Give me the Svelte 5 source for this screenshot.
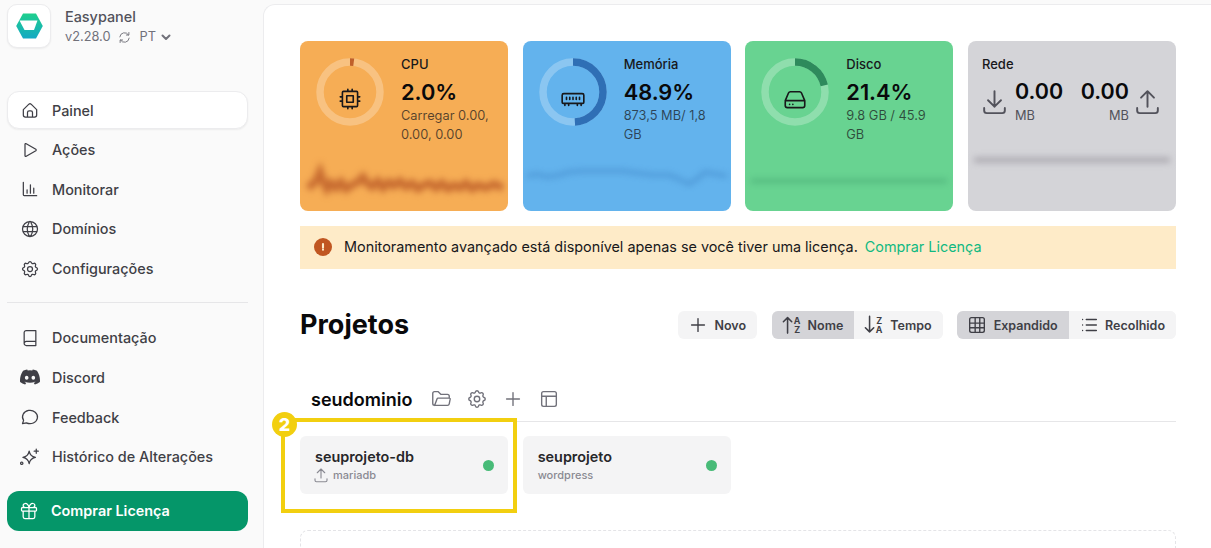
<script lang="ts">
  const navMain = [
    { label: 'Painel', icon: 'home', active: true },
    { label: 'Ações', icon: 'play' },
    { label: 'Monitorar', icon: 'bars' },
    { label: 'Domínios', icon: 'globe' },
    { label: 'Configurações', icon: 'gear' }
  ];
  const navHelp = [
    { label: 'Documentação', icon: 'book' },
    { label: 'Discord', icon: 'discord' },
    { label: 'Feedback', icon: 'chat' },
    { label: 'Histórico de Alterações', icon: 'sparkle' }
  ];
  const gear =
    'M10.325 4.317c.426-1.756 2.924-1.756 3.35 0a1.724 1.724 0 0 0 2.573 1.066c1.543-.94 3.31.826 2.37 2.37a1.724 1.724 0 0 0 1.065 2.572c1.756.426 1.756 2.924 0 3.35a1.724 1.724 0 0 0-1.066 2.573c.94 1.543-.826 3.31-2.37 2.37a1.724 1.724 0 0 0-2.572 1.065c-.426 1.756-2.924 1.756-3.35 0a1.724 1.724 0 0 0-2.573-1.066c-1.543.94-3.31-.826-2.37-2.37a1.724 1.724 0 0 0-1.065-2.572c-1.756-.426-1.756-2.924 0-3.35a1.724 1.724 0 0 0 1.066-2.573c-.94-1.543.826-3.31 2.37-2.37c1 .608 2.296.07 2.572-1.065z M9 12a3 3 0 1 0 6 0a3 3 0 0 0-6 0';
  const icons: Record<string, string> = {
    home: 'M4 11.5 10.7 5a2 2 0 0 1 2.6 0L20 11.5V18a2.5 2.5 0 0 1-2.5 2.5h-11A2.5 2.5 0 0 1 4 18z M9 20.5V15a2 2 0 0 1 2-2h2a2 2 0 0 1 2 2v5.5',
    play: 'M6 5.2v13.6a1 1 0 0 0 1.5.8L19 12.8a1 1 0 0 0 0-1.6L7.500 4.400A1 1 0 0 0 6 5.200z',
    bars: 'M4 4v15a1 1 0 0 0 1 1h15 M8.500 17v-4 M12.500 17V7 M16.500 17v-6',
    globe: 'M3 12a9 9 0 1 0 18 0a9 9 0 0 0-18 0 M3.600 9h16.800 M3.600 15h16.800 M11.500 3a17 17 0 0 0 0 18 M12.500 3a17 17 0 0 1 0 18',
    gear,
    book: 'M5 5.500A2.500 2.500 0 0 1 7.500 3H19v18H7.500A2.500 2.500 0 0 1 5 18.500z M5 18.500A2.500 2.500 0 0 1 7.500 16H19',
    chat: 'M3 20l1.300-3.900A9 8 0 1 1 7.700 19L3 20',
    sparkle: 'M11 5c.8 4.400 3.200 6.800 7.500 7.500-4.300.8-6.700 3.200-7.500 7.500-.8-4.300-3.200-6.700-7.500-7.500 4.300-.7 6.700-3.100 7.500-7.500z M19.500 2.500v5 M17 5h5 M3.500 19.500a1.400 1.400 0 1 0 0 .01',
    gift: 'M4 8h16a1 1 0 0 1 1 1v2a1 1 0 0 1-1 1H4a1 1 0 0 1-1-1V9a1 1 0 0 1 1-1z M12 8v13 M19 12v7a2 2 0 0 1-2 2H7a2 2 0 0 1-2-2v-7 M7.500 8a2.500 2.500 0 0 1 0-5A4.800 8 0 0 1 12 8a4.800 8 0 0 1 4.500-5a2.500 2.500 0 0 1 0 5',
    plus: 'M12 5v14 M5 12h14',
    download: 'M4 17v2a2 2 0 0 0 2 2h12a2 2 0 0 0 2-2v-2 M7 11l5 5 5-5 M12 4v12',
    upload: 'M4 17v2a2 2 0 0 0 2 2h12a2 2 0 0 0 2-2v-2 M7 9l5-5 5 5 M12 4v12',
    cpu: 'M6 5h12a1 1 0 0 1 1 1v12a1 1 0 0 1-1 1H6a1 1 0 0 1-1-1V6a1 1 0 0 1 1-1z M9 9h6v6H9z M3 10h2 M3 14h2 M10 3v2 M14 3v2 M21 10h-2 M21 14h-2 M14 21v-2 M10 21v-2',
    ram: 'M3.500 7h17a1.500 1.500 0 0 1 1.500 1.500V15a1 1 0 0 1-1 1H3a1 1 0 0 1-1-1V8.500A1.500 1.500 0 0 1 3.500 7z M6 10.500v2 M9 10.500v2 M12 10.500v2 M15 10.500v2 M18 10.500v2 M4.500 16v2 M8 16v2 M16 16v2 M19.500 16v2',
    disk: 'M3 13.500 6 6.500a2 2 0 0 1 1.800-1.200h8.400A2 2 0 0 1 18 6.500l3 7 M3 13.500h18V18a2 2 0 0 1-2 2H5a2 2 0 0 1-2-2z M7 17h.01 M10 17h.01',
    table: 'M6 4h12a2 2 0 0 1 2 2v12a2 2 0 0 1-2 2H6a2 2 0 0 1-2-2V6a2 2 0 0 1 2-2z M4 10h16 M4 15h16 M10 4v16 M15 4v16',
    list: 'M9 6h11 M9 12h11 M9 18h11 M5 6v.01 M5 12v.01 M5 18v.01',
    folder: 'M5 19l2.757-7.351a1 1 0 0 1 .936-.649h12.307a1 1 0 0 1 .986 1.164l-.996 5.211a2 2 0 0 1-1.964 1.625H5a2 2 0 0 1-2-2V6a2 2 0 0 1 2-2h4l3 3h7a2 2 0 0 1 2 2v2',
    layout: 'M6 4h12a2 2 0 0 1 2 2v12a2 2 0 0 1-2 2H6a2 2 0 0 1-2-2V6a2 2 0 0 1 2-2z M4 9h16 M9 9v11',
    reload: 'M19.500 13a7.600 7.600 0 0 1-14 3 M4.500 11a7.600 7.600 0 0 1 14-3 M19 4v4h-4 M5 20v-4h4',
    warn: 'M12 7v6 M12 16.500v.01'
  };
  const discord =
    'M20.317 4.37a19.791 19.791 0 0 0-4.885-1.515.074.074 0 0 0-.079.037c-.21.375-.444.864-.608 1.25a18.27 18.27 0 0 0-5.487 0 12.64 12.64 0 0 0-.617-1.25.077.077 0 0 0-.079-.037A19.736 19.736 0 0 0 3.677 4.37a.07.07 0 0 0-.032.027C.533 9.046-.32 13.58.099 18.057a.082.082 0 0 0 .031.057 19.9 19.9 0 0 0 5.993 3.03.078.078 0 0 0 .084-.028 14.09 14.09 0 0 0 1.226-1.994.076.076 0 0 0-.041-.106 13.107 13.107 0 0 1-1.872-.892.077.077 0 0 1-.008-.128 10.2 10.2 0 0 0 .372-.292.074.074 0 0 1 .077-.01c3.928 1.793 8.18 1.793 12.062 0a.074.074 0 0 1 .078.01c.12.098.246.198.373.292a.077.077 0 0 1-.006.127 12.299 12.299 0 0 1-1.873.892.077.077 0 0 0-.041.107c.36.698.772 1.362 1.225 1.993a.076.076 0 0 0 .084.028 19.839 19.839 0 0 0 6.002-3.03.077.077 0 0 0 .032-.054c.5-5.177-.838-9.674-3.549-13.66a.061.061 0 0 0-.031-.03zM8.02 15.33c-1.183 0-2.157-1.085-2.157-2.419 0-1.333.956-2.419 2.157-2.419 1.21 0 2.176 1.096 2.157 2.42 0 1.333-.956 2.418-2.157 2.418zm7.975 0c-1.183 0-2.157-1.085-2.157-2.419 0-1.333.955-2.419 2.157-2.419 1.21 0 2.176 1.096 2.157 2.42 0 1.333-.946 2.418-2.157 2.418z';

  const R = 30;
  const C = 2 * Math.PI * R;
  const stats = [
    {
      cls: 'cpu', title: 'CPU', value: '2.0%', sub: 'Carregar 0.00, 0.00, 0.00', pct: 2, icon: 'cpu', arc: '#c0602a',
      line: 'M8 33 L13 29 L17 24 L20 17 L23 26 L27 34 L31 28 L36 33 L41 27 L46 34 L52 30 L58 27 L63 22 L67 28 L72 32 L78 26 L83 33 L89 27 L94 31 L100 26 L106 32 L112 28 L118 34 L124 30 L130 28 L136 33 L142 28 L148 34 L154 30 L160 33 L166 28 L172 34 L178 30 L186 33 L194 29 L203 33',
      sw: 7.5, op: 0.85
    },
    {
      cls: 'mem', title: 'Memória', value: '48.9%', sub: '873,5 MB/ 1,8 GB', pct: 48.9, icon: 'ram', arc: '#2f6fb5',
      line: 'M4 21 L14 19 L24 22 L36 20 L46 17 L60 16 L80 16 L100 16 L114 18 L130 20 L146 20 L156 24 L166 29 L174 24 L182 17 L192 19 L204 21',
      sw: 3, op: 0.5
    }
  ];
</script>

{#snippet icon(name: string, size = 20, sw = 1.5)}
  <svg class="ico" width={size} height={size} viewBox="0 0 24 24" fill="none" stroke="currentColor" stroke-width={sw} stroke-linecap="round" stroke-linejoin="round" aria-hidden="true">
    {#if name === 'discord'}
      <path d={discord} fill="currentColor" stroke="none" />
    {:else}
      <path d={icons[name]} />
    {/if}
  </svg>
{/snippet}

{#snippet sortIcon(top: string, bottom: string, up: boolean)}
  <svg class="ico" width="21.500" height="21.500" viewBox="0 0 18 18" fill="none" stroke="currentColor" stroke-width="1.300" stroke-linecap="round" stroke-linejoin="round" aria-hidden="true">
    {#if up}
      <path d="M5.500 16V3 M2 6.500 5.500 3 9 6.500" />
    {:else}
      <path d="M5.500 2v13 M2 11.500 5.500 15 9 11.500" />
    {/if}
    <text x="13.500" y="8" class="sort-letter">{top}</text>
    <text x="13.500" y="16" class="sort-letter">{bottom}</text>
  </svg>
{/snippet}

{#snippet ring(pct: number, arc: string, name: string)}
  <div class="ring">
    <svg width="68" height="68" viewBox="0 0 68 68">
      <circle cx="34" cy="34" r={R} fill="none" stroke="rgba(255,255,255,0.26)" stroke-width="7.500" />
      <circle cx="34" cy="34" r={R} fill="none" stroke={arc} stroke-width="7.500" stroke-dasharray="{(C * pct) / 100} {C}" transform="rotate(-90 34 34)" />
    </svg>
    <div class="ring-icon">{@render icon(name, 26, 1.5)}</div>
  </div>
{/snippet}

<div class="shell">
  <aside class="side">
    <div class="brand">
      <div class="logo">
        <svg width="27" height="26" viewBox="0 0 27 26" aria-hidden="true">
          <defs>
            <linearGradient id="lg" x1="0" y1="0" x2="0" y2="1">
              <stop offset="0" stop-color="#1fcf8c" />
              <stop offset="1" stop-color="#14a9c4" />
            </linearGradient>
          </defs>
          <path d="M7 0.500h13L26.800 13 20 25.500H7L.200 13z" fill="url(#lg)" />
          <path d="M3.500 7.500H21.500L18 17H8.500z" fill="#fff" />
        </svg>
      </div>
      <div class="brand-text">
        <div class="brand-name">Easypanel</div>
        <div class="brand-meta">
          <span>v2.28.0</span>
          {@render icon('reload', 15)}
          <span class="lang">PT</span>
          <svg width="12" height="12" viewBox="0 0 12 12" fill="none" stroke="currentColor" stroke-width="2" stroke-linecap="round" stroke-linejoin="round"><path d="M2.500 4.500 6 8l3.500-3.500" /></svg>
        </div>
      </div>
    </div>

    <nav class="nav nav-main">
      {#each navMain as item}
        <div class="nav-item" class:active={item.active}>
          {@render icon(item.icon)}
          <span>{item.label}</span>
        </div>
      {/each}
    </nav>
    <div class="divider"></div>
    <nav class="nav">
      {#each navHelp as item}
        <div class="nav-item">
          {@render icon(item.icon)}
          <span>{item.label}</span>
        </div>
      {/each}
    </nav>
    <div class="buy">
      {@render icon('gift')}
      <span>Comprar Licença</span>
    </div>
  </aside>

  <main class="main">
    <section class="stats">
      {#each stats as s}
        <div class="stat {s.cls}">
          <div class="stat-top">
            {@render ring(s.pct, s.arc, s.icon)}
            <div class="stat-text">
              <div class="stat-title">{s.title}</div>
              <div class="stat-value">{s.value}</div>
              <div class="stat-sub">{s.sub}</div>
            </div>
          </div>
          <svg class="spark" viewBox="0 0 208 56" width="208" height="56" preserveAspectRatio="none">
            <path d={s.line} fill="none" stroke={s.arc} stroke-width={s.sw} opacity={s.op} />
          </svg>
        </div>
      {/each}

      <div class="stat disk">
        <div class="stat-top">
          {@render ring(21.4, '#2e8a5c', 'disk')}
          <div class="stat-text">
            <div class="stat-title">Disco</div>
            <div class="stat-value">21.4%</div>
            <div class="stat-sub">9.8 GB / 45.9 GB</div>
          </div>
        </div>
        <svg class="spark" viewBox="0 0 208 56" width="208" height="56" preserveAspectRatio="none">
          <path d="M6 26H202" fill="none" stroke="#3f9e6e" stroke-width="3" opacity="0.7" />
        </svg>
      </div>

      <div class="stat net">
        <div class="stat-title">Rede</div>
        <div class="net-row">
          <div class="net-icon">{@render icon('download', 31)}</div>
          <div class="net-val">
            <div class="net-num">0.00</div>
            <div class="net-unit">MB</div>
          </div>
          <div class="net-val right">
            <div class="net-num">0.00</div>
            <div class="net-unit">MB</div>
          </div>
          <div class="net-icon">{@render icon('upload', 31)}</div>
        </div>
        <svg class="spark" viewBox="0 0 208 56" width="208" height="56" preserveAspectRatio="none">
          <path d="M6 5H202" fill="none" stroke="#a9a7ae" stroke-width="5" />
        </svg>
      </div>
    </section>

    <div class="alert">
      <span class="alert-dot">
        <svg width="14" height="14" viewBox="0 0 24 24" fill="none" stroke="#fdeccb" stroke-width="3.600" stroke-linecap="round"><path d={icons.warn} /></svg>
      </span>
      <span>Monitoramento avançado está disponível apenas se você tiver uma licença.</span>
      <span class="alert-link">Comprar Licença</span>
    </div>

    <header class="projects-head">
      <h1>Projetos</h1>
      <div class="actions">
        <div class="btn">{@render icon('plus', 22)}<span>Novo</span></div>
        <div class="seg">
          <div class="btn on">{@render sortIcon('A', 'Z', true)}<span>Nome</span></div>
          <div class="btn">{@render sortIcon('Z', 'A', false)}<span>Tempo</span></div>
        </div>
        <div class="seg">
          <div class="btn on">{@render icon('table', 22)}<span>Expandido</span></div>
          <div class="btn">{@render icon('list', 22)}<span>Recolhido</span></div>
        </div>
      </div>
    </header>

    <div class="group-head">
      <h2>seudominio</h2>
      <div class="group-icons">
        {@render icon('folder', 22)}
        {@render icon('gear', 22)}
        {@render icon('plus', 22)}
        {@render icon('layout', 22)}
      </div>
    </div>

    <section class="services">
      <div class="service">
        <div class="service-text">
          <div class="service-name">seuprojeto-db</div>
          <div class="service-type"><span class="type-icon">{@render icon('upload', 18)}</span><span>mariadb</span></div>
        </div>
        <span class="dot"></span>
        <div class="mark"><span class="mark-badge">2</span></div>
      </div>
      <div class="service">
        <div class="service-text">
          <div class="service-name">seuprojeto</div>
          <div class="service-type"><span>wordpress</span></div>
        </div>
        <span class="dot"></span>
      </div>
    </section>

    <div class="dropzone"></div>
  </main>
</div>

<style>
  :global(body) {
    margin: 0;
    background: #fafafa;
    font-family: Inter, "Liberation Sans", sans-serif;
    color: #3f3f46;
    overflow: hidden;
  }
  .shell {
    display: flex;
    height: 548px;
    overflow: hidden;
  }
  .ico {
    flex: none;
    display: block;
  }

  .side {
    width: 263px;
    flex: none;
    box-sizing: border-box;
    padding: 4px 15px 0 7px;
  }
  .brand {
    display: flex;
    gap: 14px;
  }
  .logo {
    width: 42px;
    height: 42px;
    background: #fff;
    border: 1px solid #ececee;
    border-radius: 10px;
    box-shadow: 0 1px 2px rgba(0, 0, 0, 0.06);
    display: flex;
    align-items: center;
    justify-content: center;
  }
  .brand-text {
    padding-top: 4px;
  }
  .brand-name {
    font-size: 14.400px;
    line-height: 17px;
    font-weight: 500;
    color: #52525b;
  }
  .brand-meta {
    display: flex;
    align-items: center;
    gap: 6px;
    margin-top: 3px;
    font-size: 12.800px;
    line-height: 18px;
    color: #71717a;
  }
  .lang {
    margin-left: 2px;
    margin-right: -2px;
  }
  .nav {
    display: flex;
    flex-direction: column;
    gap: 2px;
  }
  .nav-main {
    margin-top: 43.400px;
  }
  .nav-item {
    display: flex;
    align-items: center;
    gap: 12.500px;
    height: 37.600px;
    box-sizing: border-box;
    padding: 0 11.500px;
    border: 1px solid transparent;
    border-radius: 12px;
    font-size: 14.400px;
    font-weight: 500;
    color: #3f3f46;
  }
  .nav-item.active {
    background: #fff;
    border-color: #ececee;
    box-shadow: 0 1px 2px rgba(0, 0, 0, 0.06);
  }
  .divider {
    height: 1px;
    background: #e6e6e8;
    margin: 15px 0 15.700px;
  }
  .buy {
    display: flex;
    align-items: center;
    gap: 12px;
    height: 40px;
    margin-top: 15.200px;
    padding: 0 12px;
    border-radius: 12px;
    background: #059669;
    color: #fff;
    font-size: 14.400px;
    font-weight: 600;
  }

  .main {
    flex: 1;
    box-sizing: border-box;
    height: 600px;
    margin-top: 4px;
    padding: 36px 35px 0 36px;
    background: #fff;
    border: 1px solid #ececee;
    border-right: 0;
    border-radius: 12px 0 0 0;
    min-width: 0;
  }
  .stats {
    display: grid;
    grid-template-columns: repeat(4, 208px);
    justify-content: space-between;
  }
  .stat {
    position: relative;
    height: 170px;
    box-sizing: border-box;
    padding: 17px 14px 0 16px;
    border-radius: 8px;
    overflow: hidden;
  }
  .stat.cpu { background: #f6ad55; }
  .stat.mem { background: #63b3ed; }
  .stat.disk { background: #68d391; }
  .stat.net { background: #d4d4d8; padding: 16px 13px 0 11px; }
  .stat-top {
    display: flex;
    gap: 17px;
  }
  .ring {
    position: relative;
    width: 68px;
    height: 68px;
    flex: none;
  }
  .ring-icon {
    position: absolute;
    left: 21px;
    top: 28px;
    color: #18181b;
  }
  .stat-text {
    min-width: 0;
    margin-top: -1px;
  }
  .stat-title {
    font-size: 13px;
    line-height: 14px;
    font-weight: 500;
    color: #18181b;
  }
  .stat-value {
    margin-top: 6px;
    font-size: 21.800px;
    line-height: 30px;
    font-weight: 600;
    color: #09090b;
  }
  .stat-sub {
    margin-top: -1px;
    font-size: 12.800px;
    line-height: 19px;
    color: rgba(24, 24, 27, 0.72);
  }
  .spark {
    position: absolute;
    left: 0;
    bottom: 0;
    filter: blur(3px);
  }
  .stat.net .stat-title {
    margin-left: 3px;
  }
  .net-row {
    display: flex;
    justify-content: space-between;
    margin-top: 5px;
    color: #52525b;
  }
  .net-icon {
    padding-top: 10px;
  }
  .net-val {
    margin-left: 5px;
    flex: 1;
  }
  .net-val.right {
    text-align: right;
    margin: 0 3px 0 0;
  }
  .net-num {
    font-size: 21.500px;
    line-height: 30px;
    font-weight: 600;
    color: #09090b;
  }
  .net-unit {
    font-size: 12.800px;
    line-height: 19px;
    color: #52525b;
  }

  .alert {
    display: flex;
    align-items: center;
    height: 43px;
    box-sizing: border-box;
    margin-top: 15px;
    padding: 0 0 2px 14px;
    background: #feebc8;
    font-size: 14.400px;
    color: #18181b;
  }
  .alert-dot {
    width: 18px;
    height: 18px;
    margin-right: 12px;
    border-radius: 50%;
    background: #c05621;
    display: flex;
    align-items: center;
    justify-content: center;
  }
  .alert-link {
    margin-left: 7px;
    color: #10b981;
  }

  .projects-head {
    display: flex;
    align-items: center;
    justify-content: space-between;
    margin-top: 42px;
    height: 28px;
  }
  h1 {
    margin: 0 0 2px;
    font-size: 27px;
    font-weight: 700;
    color: #09090b;
  }
  .actions {
    display: flex;
    gap: 14.500px;
  }
  .seg {
    display: flex;
    border-radius: 6px;
    overflow: hidden;
    background: #f4f4f5;
  }
  .btn {
    display: flex;
    align-items: center;
    gap: 5.500px;
    height: 28px;
    box-sizing: border-box;
    padding: 0 11px 0 9px;
    border-radius: 6px;
    background: #f4f4f5;
    font-size: 12.500px;
    font-weight: 600;
    color: #3f3f46;
  }
  .seg .btn {
    border-radius: 0;
  }
  .btn.on {
    background: #d4d4d8;
  }
  .sort-letter {
    font-size: 7.500px;
    font-weight: 700;
    text-anchor: middle;
    fill: currentColor;
    stroke: none;
  }

  .group-head {
    display: flex;
    align-items: center;
    gap: 18px;
    height: 44px;
    margin-top: 38px;
    padding-left: 11px;
    border-bottom: 1px solid #e6e6e8;
  }
  h2 {
    margin: 0;
    font-size: 18px;
    font-weight: 600;
    color: #09090b;
  }
  .group-icons {
    display: flex;
    gap: 14px;
    color: #71717a;
  }
  .services {
    display: grid;
    grid-template-columns: repeat(4, 208px);
    justify-content: space-between;
    margin-top: 14px;
  }
  .service {
    position: relative;
    display: flex;
    align-items: center;
    justify-content: space-between;
    height: 58px;
    box-sizing: border-box;
    padding: 0 14px 0 15px;
    border-radius: 6px;
    background: #f4f4f5;
  }
  .service-name {
    font-size: 14.400px;
    line-height: 18px;
    font-weight: 600;
    color: #27272a;
    margin-bottom: 1px;
  }
  .service-type {
    display: flex;
    align-items: center;
    gap: 3px;
    font-size: 11px;
    line-height: 16px;
    font-weight: 500;
    color: #8a8a92;
  }
  .type-icon {
    margin: -1px 0 -1px -3px;
  }
  .dot {
    width: 11px;
    height: 11px;
    border-radius: 50%;
    background: #48bb78;
  }
  .mark {
    position: absolute;
    left: -19px;
    top: -18px;
    width: 228px;
    height: 87px;
    border: 4px solid #f2cf10;
    pointer-events: none;
  }
  .mark-badge {
    position: absolute;
    left: -13px;
    top: -10px;
    width: 25px;
    height: 25px;
    border-radius: 50%;
    background: #f2cf10;
    color: #fff;
    font-size: 18px;
    line-height: 25px;
    font-weight: 800;
    text-align: center;
  }
  .dropzone {
    height: 100px;
    margin-top: 36px;
    border: 1px dashed #e4e4e7;
    border-radius: 8px;
  }
</style>
